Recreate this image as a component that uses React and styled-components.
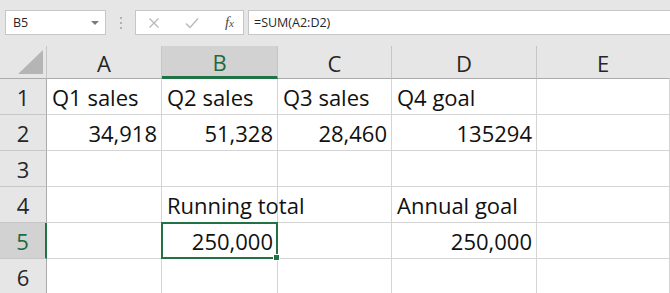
import styled, { createGlobalStyle } from 'styled-components';

const GlobalStyle = createGlobalStyle`
  html, body {
    margin: 0;
    padding: 0;
    background: #ffffff;
  }
  body {
    width: 670px;
    height: 293px;
    overflow: hidden;
  }
`;

const Window = styled.div`
  width: 670px;
  height: 293px;
  overflow: hidden;
  background: #fff;
  font-family: "Open Sans", "Noto Sans", sans-serif;
`;

const FormulaBar = styled.div`
  display: flex;
  align-items: center;
  height: 46px;
  padding: 0 0 1px 5px;
  box-sizing: border-box;
  background: #e6e6e6;
`;

const NameBox = styled.div`
  display: flex;
  align-items: center;
  justify-content: space-between;
  width: 101px;
  height: 25px;
  box-sizing: border-box;
  padding: 0 6px 0 7px;
  background: #fff;
  border: 1px solid #c6c6c6;
  font-size: 12.5px;
  color: #262626;
`;

const Caret = styled.span`
  width: 0;
  height: 0;
  border-left: 4px solid transparent;
  border-right: 4px solid transparent;
  border-top: 4px solid #7a7a7a;
`;

const Grip = styled.div`
  display: flex;
  flex-direction: column;
  gap: 3px;
  margin: 0 13px 0 14px;
  span {
    width: 2px;
    height: 2px;
    background: #b2b2b2;
  }
`;

const IconBox = styled.div`
  display: flex;
  align-items: center;
  width: 109px;
  height: 25px;
  box-sizing: border-box;
  padding: 0 9px 0 12px;
  justify-content: space-between;
  background: #fff;
  border: 1px solid #c6c6c6;
`;

const Fx = styled.span`
  font-family: "Liberation Serif", serif;
  font-style: italic;
  font-size: 15px;
  color: #4a4a4a;
  span {
    font-size: 11px;
  }
`;

const FormulaInput = styled.div`
  flex: 1;
  display: flex;
  align-items: center;
  height: 25px;
  margin-left: 4px;
  padding-left: 5px;
  box-sizing: border-box;
  background: #fff;
  border: 1px solid #c6c6c6;
  border-right: none;
  font-size: 12.5px;
  color: #262626;
`;

const Sheet = styled.div`
  display: grid;
  grid-template-columns: 47px 115px 116px 114px 145px 1fr;
  grid-template-rows: 33px repeat(6, 36px);
`;

const Corner = styled.div`
  position: relative;
  background: #e6e6e6;
  border-right: 1px solid #c6c6c6;
  border-bottom: 1px solid #ababab;
  &::after {
    content: "";
    position: absolute;
    right: 3px;
    bottom: 4px;
    width: 0;
    height: 0;
    border-left: 25px solid transparent;
    border-bottom: 24px solid #b5b5b5;
  }
`;

const ColHead = styled.div`
  display: flex;
  align-items: center;
  justify-content: center;
  padding-top: 2px;
  box-sizing: border-box;
  background: ${(p) => (p.$active ? '#d2d2d2' : '#e6e6e6')};
  border-right: 1px solid ${(p) => (p.$last ? 'transparent' : '#c6c6c6')};
  border-bottom: ${(p) => (p.$active ? '3px solid #217346' : '1px solid #ababab')};
  color: ${(p) => (p.$active ? '#1e6b40' : '#262626')};
  font-size: 22px;
`;

const RowHead = styled.div`
  display: flex;
  align-items: center;
  justify-content: center;
  padding-top: 1px;
  box-sizing: border-box;
  background: ${(p) => (p.$active ? '#d2d2d2' : '#e6e6e6')};
  border-right: ${(p) => (p.$active ? '2px solid #217346' : '1px solid #ababab')};
  border-bottom: 1px solid #c6c6c6;
  color: ${(p) => (p.$active ? '#1e6b40' : '#262626')};
  font-size: 22px;
`;

const Cell = styled.div`
  position: relative;
  display: flex;
  align-items: flex-end;
  justify-content: ${(p) => (p.$num ? 'flex-end' : 'flex-start')};
  padding: 0 4px 2px 5px;
  box-sizing: border-box;
  border-right: 1px solid #d4d4d4;
  border-bottom: 1px solid #d4d4d4;
  white-space: nowrap;
  font-size: 22px;
  color: #111;
  overflow: visible;
  z-index: ${(p) => (p.$selected ? 2 : 'auto')};
`;

const Selection = styled.span`
  position: absolute;
  left: -1px;
  top: -1px;
  right: -1px;
  bottom: -1px;
  border: 2px solid #217346;
  pointer-events: none;
  &::after {
    content: "";
    position: absolute;
    right: -4px;
    bottom: -4px;
    width: 5px;
    height: 5px;
    background: #217346;
    border: 1px solid #fff;
  }
`;

const Label = styled.span`
  position: relative;
`;

const columns = ['A', 'B', 'C', 'D', 'E'];

const rows = [
  [{ v: 'Q1 sales' }, { v: 'Q2 sales' }, { v: 'Q3 sales' }, { v: 'Q4 goal' }, {}],
  [{ v: '34,918', n: true }, { v: '51,328', n: true }, { v: '28,460', n: true }, { v: '135294', n: true }, {}],
  [{}, {}, {}, {}, {}],
  [{}, { v: 'Running total' }, {}, { v: 'Annual goal' }, {}],
  [{}, { v: '250,000', n: true, sel: true }, {}, { v: '250,000', n: true }, {}],
  [{}, {}, {}, {}, {}],
];

const CrossIcon = () => (
  <svg width="12" height="12" viewBox="0 0 12 12">
    <path d="M1.5 1.5 L10.5 10.5 M10.5 1.5 L1.5 10.5" stroke="#b8b8b8" strokeWidth="1.3" fill="none" />
  </svg>
);

const CheckIcon = () => (
  <svg width="14" height="12" viewBox="0 0 14 12">
    <path d="M1 6.5 L5 10.5 L13 1.5" stroke="#b8b8b8" strokeWidth="1.3" fill="none" />
  </svg>
);

export default function App() {
  return (
    <Window>
      <GlobalStyle />
      <FormulaBar>
        <NameBox>
          B5
          <Caret />
        </NameBox>
        <Grip>
          <span />
          <span />
          <span />
        </Grip>
        <IconBox>
          <CrossIcon />
          <CheckIcon />
          <Fx>
            f<span>x</span>
          </Fx>
        </IconBox>
        <FormulaInput>=SUM(A2:D2)</FormulaInput>
      </FormulaBar>
      <Sheet>
        <Corner />
        {columns.map((c, i) => (
          <ColHead key={c} $active={c === 'B'} $last={i === columns.length - 1}>
            {c}
          </ColHead>
        ))}
        {rows.map((row, r) => (
          <>
            <RowHead key={`h${r}`} $active={r === 4}>
              {r + 1}
            </RowHead>
            {row.map((cell, c) => (
              <Cell key={`${r}-${c}`} $num={cell.n} $selected={cell.sel}>
                {cell.sel && <Selection />}
                {cell.v && <Label>{cell.v}</Label>}
              </Cell>
            ))}
          </>
        ))}
      </Sheet>
    </Window>
  );
}
